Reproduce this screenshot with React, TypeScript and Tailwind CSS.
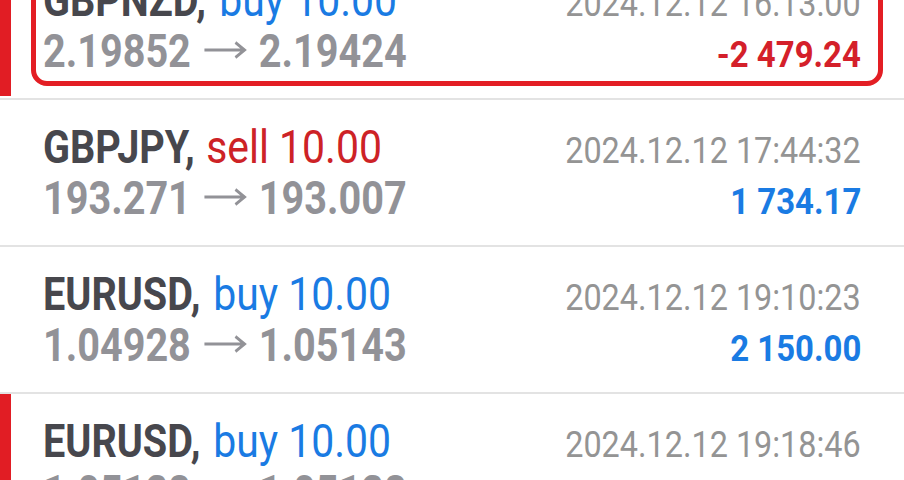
import React from "react";

type Deal = {
  symbol: string;
  side: "buy" | "sell";
  volume: string;
  open: string;
  close: string;
  time: string;
  profit: string;
  marked?: boolean;
  selected?: boolean;
};

const deals: Deal[] = [
  {
    symbol: "GBPNZD",
    side: "buy",
    volume: "10.00",
    open: "2.19852",
    close: "2.19424",
    time: "2024.12.12 16:13:00",
    profit: "-2 479.24",
    marked: true,
    selected: true,
  },
  {
    symbol: "GBPJPY",
    side: "sell",
    volume: "10.00",
    open: "193.271",
    close: "193.007",
    time: "2024.12.12 17:44:32",
    profit: "1 734.17",
  },
  {
    symbol: "EURUSD",
    side: "buy",
    volume: "10.00",
    open: "1.04928",
    close: "1.05143",
    time: "2024.12.12 19:10:23",
    profit: "2 150.00",
  },
  {
    symbol: "EURUSD",
    side: "buy",
    volume: "10.00",
    open: "1.05128",
    close: "1.05128",
    time: "2024.12.12 19:18:46",
    profit: "0.00",
    marked: true,
  },
];

const Arrow = () => (
  <svg viewBox="0 0 50 20" className="mx-[14px] inline-block h-[20px] w-[51px] align-[7px]">
    <path d="M1 10 H47 M37 2.5 L47.5 10 L37 17.5" fill="none" stroke="#929297" strokeWidth="3.2" />
  </svg>
);

const DealRow = ({ deal }: { deal: Deal }) => {
  const loss = deal.profit.startsWith("-");
  return (
    <div className="relative h-[147px] border-b-2 border-[#e3e3e3] bg-white">
      {/* red marker on the left edge */}
      {deal.marked && <div className="absolute left-0 top-0 bottom-[2px] w-[11px] bg-[#e11d24]" />}
      {/* selection frame */}
      {deal.selected && (
        <div className="absolute left-[31px] right-[21px] top-[12px] bottom-[12px] rounded-[16px] border-[5px] border-[#e31e24]" />
      )}

      <div className="pl-[43px] pr-[43px] pt-[22px] whitespace-nowrap">
        {/* symbol, side, time */}
        <div className="flex items-baseline justify-between">
          <div className="flex text-[46px] leading-[51px]">
            <span className="origin-left scale-x-[0.861] font-bold text-[#47474d]">{deal.symbol},</span>
            <span
              className={`-ml-[23px] origin-left scale-x-[0.89] ${deal.side === "buy" ? "text-[#1a7be3]" : "text-[#cd2226]"}`}
            >
              &nbsp;{deal.side} {deal.volume}
            </span>
          </div>
          <div className="origin-right scale-x-[0.875] text-[37px] leading-[44px] text-[#949494]">{deal.time}</div>
        </div>

        {/* prices, profit */}
        <div className="flex items-baseline justify-between">
          <div className="origin-left scale-x-[0.861] text-[46px] leading-[51px] font-bold text-[#929297]">
            {deal.open}
            <Arrow />
            {deal.close}
          </div>
          <div
            className={`origin-right scale-x-[0.89] text-[37px] leading-[44px] font-bold ${loss ? "text-[#d4202a]" : "text-[#1a7be3]"}`}
          >
            {deal.profit}
          </div>
        </div>
      </div>
    </div>
  );
};

export default function App() {
  return (
    <div className="h-[480px] w-[904px] overflow-hidden bg-white" style={{ fontFamily: "Roboto, 'Noto Sans', sans-serif" }}>
      <div className="-mt-[47px]">
        {deals.map((deal, i) => (
          <DealRow key={i} deal={deal} />
        ))}
      </div>
    </div>
  );
}
